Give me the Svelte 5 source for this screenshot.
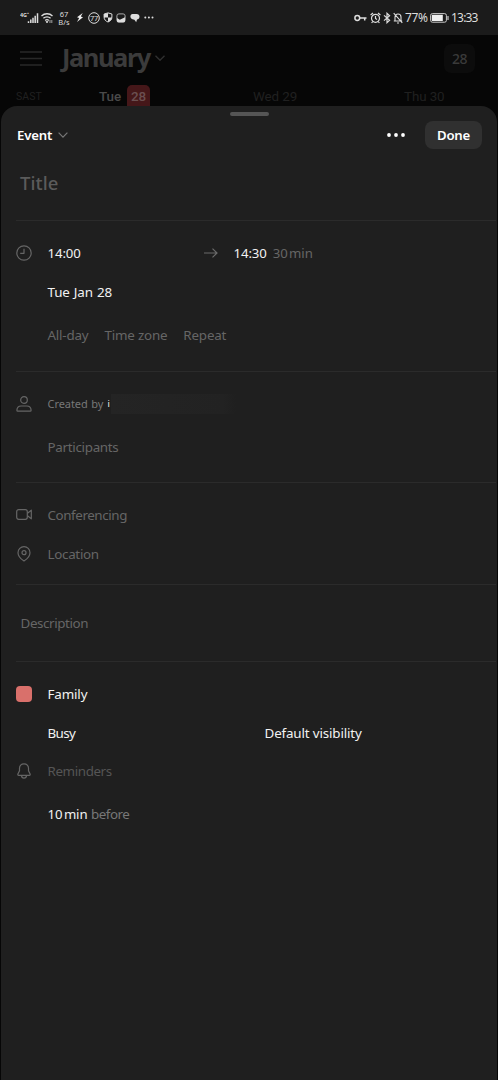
<script>
    let dayHeaders = [
        {label: 'Wed 29', id: 'wed'},
        {label: 'Thu 30', id: 'thu'}
    ];

    let options = ['All-day', 'Time zone', 'Repeat'];
</script>

<div class="screen">
    <div class="status">
        <div class="status-left">
            <svg width="21" height="14" viewBox="0 0 21 14">
                <text x="0" y="5.5" font-size="5.5" font-weight="700" fill="#ddd" textLength="9" lengthAdjust="spacingAndGlyphs">4G⁺</text>
                <path d="M8.5 12V10.2M10.8 12V8.6M13 12V6.8M15.2 12V4.8M17.5 12V2.2" stroke="#ddd" stroke-width="1.5" />
            </svg>
            <svg width="12" height="12" viewBox="0 0 12 12" fill="none" stroke="#ddd" stroke-width="1.3">
                <path d="M.5 4C3.5 1 8.5 1 11.5 4M2.4 6.3C4.4 4.4 7.6 4.4 9.6 6.3M4.2 8.5C5.2 7.5 6.8 7.5 7.8 8.5" />
                <path d="M5 9.5h2L6 11zM9 8v3M10.8 8v3" fill="#ddd" stroke-width=".7" />
            </svg>
            <div class="speed"><span>67</span><span>B/s</span></div>
            <svg class="bolt" width="8" height="11" viewBox="0 0 8 11" fill="#eee"><path d="M6.7 1 1 5.3l2.2.8L1 10 7 5.2 4.8 4.5z" /></svg>
            <svg class="ring" width="12" height="12" viewBox="0 0 12 12" fill="none" stroke="#ddd">
                <circle cx="6" cy="6" r="5.3" />
                <text x="6" y="8.7" text-anchor="middle" font-size="7.5" fill="#ddd" stroke="none" letter-spacing="-.4">77</text>
            </svg>
            <svg class="shield" width="10" height="11" viewBox="0 0 10 11">
                <path d="M5 .9 8.9 2v3c0 2.5-1.5 4.1-3.9 5C2.6 9.1 1.1 7.5 1.1 5V2z" fill="#1b1b1b" stroke="#ddd" />
                <path d="M5 1v4.6H1V2.2zM5 5.6h4C8.6 8 7.2 9.2 5 10z" fill="#ddd" />
            </svg>
            <svg class="mail" width="10" height="10" viewBox="0 0 10 10">
                <rect x=".9" y=".9" width="8.2" height="8.2" rx="2" fill="#1b1b1b" stroke="#bbb" stroke-width=".9" />
                <path d="M1 5 3.8 6.8 9 4.2v4.3l-.8.7H1.7L1 8.5z" fill="#ddd" />
            </svg>
            <svg class="chat" width="10" height="10" viewBox="0 0 10 10" fill="#ddd"><path d="M2.5.9h4C8.5.9 9.6 2.2 9.5 3.8 9.4 5.5 8.3 6.4 7 6.6L6.2 9.2 4.4 6.8 2.5 6.3C1 5.6.4 4.5.4 3.4.5 1.9 1.2.9 2.5.9z" /></svg>
            <svg class="more" width="10" height="3" viewBox="0 0 10 3" fill="#ddd"><circle cx="1.3" cy="1.5" r="1" /><circle cx="4.9" cy="1.5" r="1" /><circle cx="8.5" cy="1.5" r="1" /></svg>
        </div>
        <div class="status-right">
            <svg width="13" height="8" viewBox="0 0 13 8" fill="none" stroke="#ddd" stroke-width="1.5"><circle cx="3.3" cy="4" r="2.4" /><path d="M5.7 4H12.5M10.7 4v2.6" /></svg>
            <svg class="alarm" width="11" height="12" viewBox="0 0 11 12" fill="none" stroke="#ddd" stroke-width="1.2"><circle cx="5.5" cy="6.3" r="4" /><path d="M5.5 4v2.5L7 7.5M.6 3 3 1M10.4 3 8 1M2.8 9.5 1.6 11M8.2 9.5 9.4 11" /></svg>
            <svg class="bt" width="8" height="12" viewBox="0 0 8 12" fill="none" stroke="#ddd" stroke-width="1.2"><path d="M1 3.4 6.6 8.3 4 10.7V1.3L6.6 3.7 1 8.6" /></svg>
            <svg class="mute" width="10" height="12" viewBox="0 0 10 12" fill="none" stroke="#ddd" stroke-width="1.1"><path d="M2 9V5C2 3.2 3.2 2 5 2s3 1.2 3 3v4zM.8 9h8.4M4 11h2M.7 1.2 9.3 10.8" /></svg>
            <span class="pct">77%</span>
            <svg class="battery" width="19" height="10" viewBox="0 0 19 10"><rect x=".6" y=".6" width="15.8" height="8.6" rx="1.8" fill="none" stroke="#ccc" /><rect x="1.8" y="1.8" width="11" height="6.2" fill="#eee" /><path d="M18 3v4" stroke="#ccc" stroke-width="1.2" /></svg>
            <span class="clock">13:33</span>
        </div>
    </div>

    <div class="calendar">
        <div class="month-row">
            <svg width="22" height="15" viewBox="0 0 22 15" stroke="#282828" stroke-width="1.5"><path d="M0 1h22M0 7.5h22M0 14h22" /></svg>
            <span class="month">January</span>
            <svg class="month-caret" width="10" height="6" viewBox="0 0 10 6" fill="none" stroke="#303030" stroke-width="1.4"><path d="M.5.7 5 5.2 9.5.7" /></svg>
            <div class="today">28</div>
        </div>
        <div class="days">
            <span class="zone">SAST</span>
            <span class="tue">Tue</span>
            <span class="badge">28</span>
            {#each dayHeaders as day}
                <span class="day {day.id}">{day.label}</span>
            {/each}
        </div>
    </div>

    <div class="sheet">
        <div class="handle"></div>
        <div class="head">
            <span class="type">Event</span>
            <svg class="type-caret" width="10" height="6" viewBox="0 0 10 6" fill="none" stroke="#777" stroke-width="1.2"><path d="M.6.7 5 5.1 9.4.7" /></svg>
            <svg class="dots" width="18" height="4" viewBox="0 0 18 4" fill="#fff"><circle cx="2" cy="2" r="1.9" /><circle cx="9" cy="2" r="1.9" /><circle cx="16" cy="2" r="1.9" /></svg>
            <button class="done">Done</button>
        </div>
        <div class="title">Title</div>

        <section class="when">
            <div class="row">
                <svg class="icon" viewBox="0 0 16 16"><circle cx="8" cy="8" r="7.2" /><path d="M8 3.8V8.3H4.2" /></svg>
                <span class="start time">14:00</span>
                <svg class="arrow" width="14" height="10" viewBox="0 0 14 10" fill="none" stroke="#6b6b6b" stroke-width="1.2"><path d="M0 5h13M8.5.6 13 5 8.5 9.4" /></svg>
                <span class="time">14:30</span>
                <span class="length time muted">30<i></i>min</span>
            </div>
            <div class="row mid indent date">Tue Jan 28</div>
            <div class="row tall indent muted options">
                {#each options as option}
                    <span>{option}</span>
                {/each}
            </div>
        </section>

        <section class="people">
            <div class="row">
                <svg class="icon" viewBox="0 0 16 16"><circle cx="8" cy="4" r="3.3" /><path d="M.9 14.2c.1-2.6 1.8-4.2 4.2-4.2h5.8c2.4 0 4.1 1.6 4.2 4.2 0 .6-.3.9-.9.9H1.8c-.6 0-.9-.3-.9-.9z" /></svg>
                <span class="created">Created by</span>
                <span class="initial">i</span>
                <span class="redacted"></span>
            </div>
            <div class="row tall indent muted participants">Participants</div>
        </section>

        <section class="place">
            <div class="row muted conf">
                <svg class="icon" viewBox="0 0 16 16"><rect x=".7" y="2.7" width="10.6" height="9.6" rx="2" /><path d="m11.5 6.2 3.800-3v8.600l-3.800-3" /></svg>
                <span>Conferencing</span>
            </div>
            <div class="row mid muted">
                <svg class="icon" viewBox="0 0 16 16"><path d="M8 15C5 13 2 10.3 2 6.7 2 3.2 4.7.7 8 .7s6 2.5 6 6C14 10.3 11 13 8 15z" /><circle cx="8" cy="6.7" r="2" /></svg>
                <span>Location</span>
            </div>
        </section>

        <section class="desc muted">Description</section>

        <section class="settings">
            <div class="row">
                <span class="swatch"></span>
                <span class="family">Family</span>
            </div>
            <div class="row mid indent">
                <span class="busy">Busy</span>
                <span class="visibility">Default visibility</span>
            </div>
            <div class="row mid remind">
                <svg class="icon" viewBox="0 0 16 16"><path d="M8 .8c-2.8 0-4.5 1.9-4.5 4.5v2.5L1.9 11c-.3.7 0 1.3.8 1.3h10.6c.8 0 1.1-.6.8-1.3l-1.6-3.2V5.3C12.5 2.7 10.8.8 8 .8zM5.5 12.5c.1 1.7 1.1 2.7 2.5 2.7s2.4-1 2.5-2.7" /></svg>
                <span>Reminders</span>
            </div>
            <div class="row tall indent"><span class="time">10<i></i>min</span><span class="before">before</span></div>
        </section>
    </div>
</div>

<style>
    :global(body) {background: #060606;}
    * {box-sizing: border-box;}
    svg {flex: none;display: block;}
    .screen {height: 1080px;overflow: hidden;background: #060606;color: #f2f2f2;font: 13.4px/20px "Noto Sans", sans-serif;display: flex;flex-direction: column;white-space: nowrap;}
    .status {height: 35px;flex: none;background: #1b1b1b;display: flex;justify-content: space-between;color: #ddd;padding: 0 20px 0 20px;}
    .status-left, .status-right {display: flex;align-items: center;}
    .speed {width: 14px;margin-left: 4px;display: flex;flex-direction: column;align-items: center;font-size: 7.5px;line-height: 8px;}
    .bolt {margin-left: 5px;}
    .ring {margin-left: 4px;}
    .shield {margin-left: 3px;}
    .mail {margin-left: 3px;}
    .chat {margin-left: 4px;}
    .more {margin-left: 4px;}
    .alarm {margin-left: 3px;}
    .bt {margin-left: 2px;}
    .mute {margin-left: 2px;}
    .pct {width: 22px;margin-left: 2px;font-size: 12px;letter-spacing: -.4px;}
    .battery {margin-left: 3px;}
    .clock {width: 27px;margin-left: 2px;font-size: 12px;letter-spacing: -.8px;}

    .calendar {height: 71px;flex: none;}
    .month-row {height: 46px;display: flex;align-items: center;padding: 0 23px 0 20px;}
    .month {margin-left: 20px;font-size: 25.5px;line-height: 34px;font-weight: 700;letter-spacing: -1.45px;color: #3b3b3b;width: 88px;transform: translateY(-1px);}
    .month-caret {margin-left: 5px;}
    .today {margin-left: auto;width: 31px;height: 29px;border-radius: 7px;background: #0c0c0c;color: #3a3a3a;font: 500 14px/29px "Noto Sans", sans-serif;text-align: center;letter-spacing: -.4px;}
    .days {height: 25px;display: flex;align-items: flex-end;padding-left: 16px;font: 13.4px/19px Roboto, sans-serif;color: #202020;}
    .zone {width: 83px;font-size: 10.5px;letter-spacing: .1px;}
    .tue {width: 28px;color: #4a4a4a;font-weight: 500;}
    .badge {width: 23px;height: 21px;padding-top: 2px;border-radius: 5px 5px 0 0;background: #451719;color: #6b5051;font-weight: 500;text-align: center;}
    .day {letter-spacing: -.1px;}
    .wed {margin-left: 103px;width: 151px;}

    .sheet {flex: 1;margin: 0 1px;background: #1f1f1f;border-radius: 16px 16px 0 0;padding-left: 15px;}
    .handle {width: 39px;height: 4px;margin: 0 auto;border-radius: 2px;background: #555;transform: translate(-7px, 6px);}
    .head {height: 50px;display: flex;align-items: center;padding: 0 15px 0 1px;font-weight: 600;color: #fff;}
    .type {width: 35px;font-size: 13.2px;letter-spacing: -.2px;}
    .type-caret {margin-left: 6px;}
    .dots {margin-left: auto;}
    .done {width: 57px;height: 28px;margin-left: 20px;padding: 0;border: 0;border-radius: 8px;background: #303030;color: #fff;font: 600 13.2px/28px "Noto Sans", sans-serif;letter-spacing: -.2px;}
    .title {height: 60px;padding: 10px 0 0 4px;font-size: 18.5px;line-height: 25px;font-weight: 500;letter-spacing: .1px;color: #5b5b5b;}

    section {border-top: 1px solid #2b2b2b;padding-top: 11px;margin-right: 1px;}
    .when {height: 151px;}
    .people {height: 111px;}
    .place {height: 102px;}
    .desc {height: 77px;padding: 28px 0 0 4.5px;letter-spacing: -.4px;}
    .row {height: 41px;display: flex;align-items: center;letter-spacing: -.3px;}
    .mid {height: 38px;}
    .tall {height: 48px;}
    .indent {padding-left: 31.5px;}
    .icon {width: 16px;height: 16px;margin-right: 15.5px;fill: none;stroke: #666;stroke-width: 1.2;stroke-linejoin: round;}
    .muted {color: #666;}
    i {display: inline-block;width: 1.5px;}
    .time {font-size: 13.2px;letter-spacing: -.1px;}
    .start {width: 156px;}
    .arrow {margin-right: 16px;}
    .length {margin-left: 6px;}
    .date {letter-spacing: -.15px;word-spacing: .8px;}
    .options {gap: 16px;letter-spacing: -.2px;}
    .created {width: 57px;font-size: 11px;letter-spacing: -.05px;word-spacing: .7px;color: #777;}
    .initial {width: 3px;margin-left: 3px;font-size: 9px;}
    .redacted {width: 125px;height: 20px;background: linear-gradient(to right, #242424, #222 90%, #1f1f1f);}
    .participants {padding-bottom: 2px;}
    .conf {letter-spacing: -.42px;}
    .swatch {width: 16px;height: 16px;margin-right: 15.5px;border-radius: 4px;background: #d9706b;}
    .family {letter-spacing: -.15px;}
    .busy {width: 217px;letter-spacing: -.6px;}
    .visibility {letter-spacing: -.15px;}
    .remind {color: #555;letter-spacing: -.4px;}
    .before {margin-left: 3.5px;color: #777;letter-spacing: -.5px;}
</style>
